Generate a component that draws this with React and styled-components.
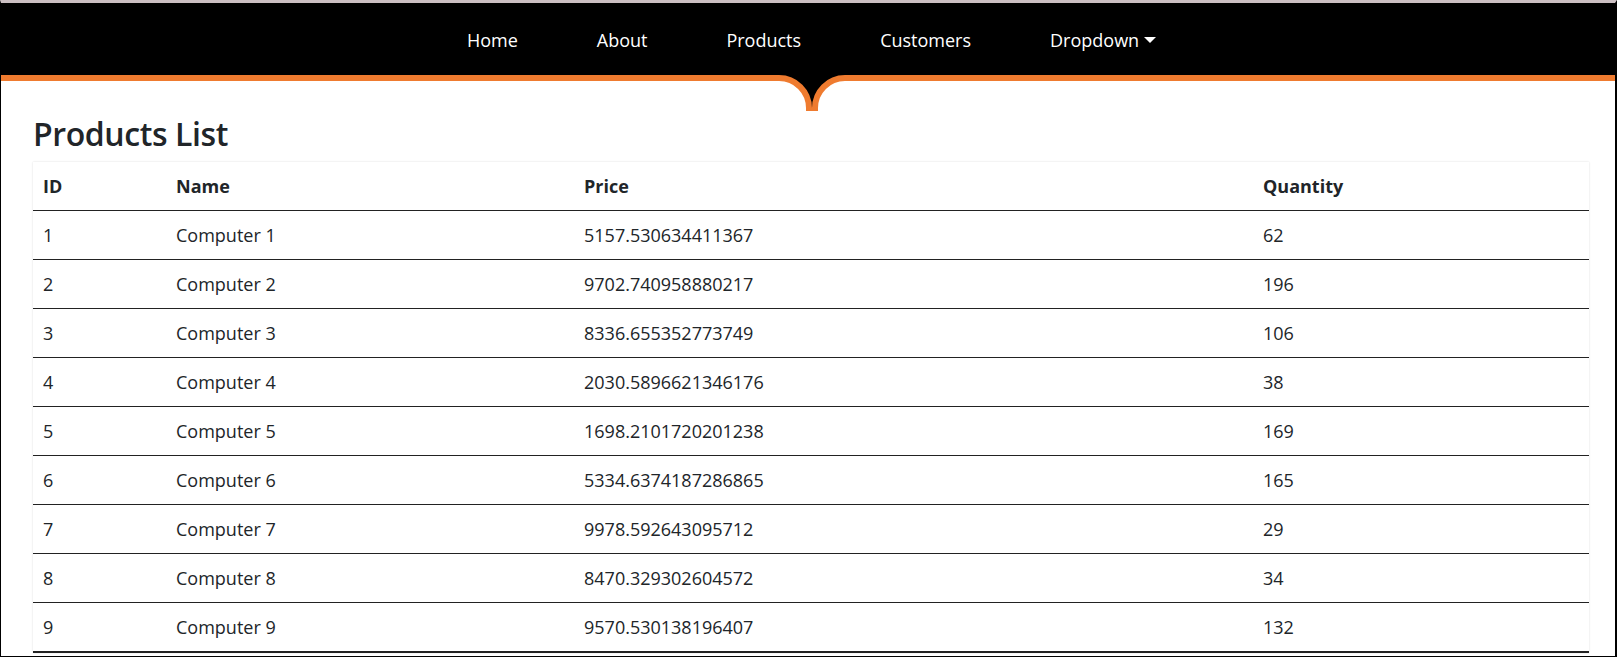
import React from "react";
import styled, { createGlobalStyle } from "styled-components";

const GlobalStyle = createGlobalStyle`
  html, body { margin: 0; padding: 0; background: #fff; }
  body {
    font-family: "Segoe UI", "Open Sans", "Noto Sans", sans-serif;
    color: #212529;
  }
  * { box-sizing: border-box; }
`;

const Frame = styled.div`
  height: 657px;
  border-top: 3px solid #cbbfc2;
  border-left: 1px solid #000;
  border-right: 2px solid #000;
  border-bottom: 1px solid #000;
  overflow: hidden;
  display: flex;
  flex-direction: column;
`;

const NavBar = styled.nav`
  position: relative;
  flex: none;
  height: 78px;
  background: #000;
  border-bottom: 6px solid #ef7b2f;
  z-index: 2;
`;

const NavList = styled.ul`
  list-style: none;
  margin: 0;
  padding: 2px 0 0 7px;
  height: 72px;
  display: flex;
  align-items: center;
  justify-content: center;
  gap: 79px;
`;

const NavLink = styled.a`
  color: #fff;
  font-size: 18px;
  line-height: 26px;
  text-decoration: none;
  display: inline-flex;
  align-items: center;
  white-space: nowrap;

  ${(p) =>
    p.$dropdown &&
    `
    &::after {
      content: "";
      display: inline-block;
      margin-left: 5px;
      border-top: 6px solid #fff;
      border-left: 6px solid transparent;
      border-right: 6px solid transparent;
    }
  `}
`;

const Notch = styled.svg`
  position: absolute;
  top: 69px;
  left: calc(50% - 48px);
  width: 104px;
  height: 44px;
  overflow: visible;
`;

const Main = styled.main`
  flex: 1;
  padding: 0 26px 0 32px;
`;

const Title = styled.h3`
  margin: 34px 0 9px;
  font-size: 32px;
  line-height: 38px;
  font-weight: 600;
  letter-spacing: -0.4px;
  color: #212529;
`;

const Table = styled.table`
  width: 100%;
  border-collapse: collapse;
  table-layout: fixed;
  box-shadow: 0 0 2px rgba(0, 0, 0, 0.14);
  font-size: 18px;
  color: #212529;
`;

const HeadCell = styled.th`
  text-align: left;
  font-weight: 700;
  padding: 10px 10px;
  line-height: 28px;
  border-bottom: 1px solid #222;
`;

const Row = styled.tr`
  & > td {
    border-bottom: ${(p) => (p.$last ? "2px solid #222" : "1px solid #222")};
  }
`;

const Cell = styled.td`
  padding: 10px 10px;
  line-height: 28px;
  font-weight: 400;
`;

const products = [
  [1, "Computer 1", "5157.530634411367", 62],
  [2, "Computer 2", "9702.740958880217", 196],
  [3, "Computer 3", "8336.655352773749", 106],
  [4, "Computer 4", "2030.5896621346176", 38],
  [5, "Computer 5", "1698.2101720201238", 169],
  [6, "Computer 6", "5334.6374187286865", 165],
  [7, "Computer 7", "9978.592643095712", 29],
  [8, "Computer 8", "8470.329302604572", 34],
  [9, "Computer 9", "9570.530138196407", 132],
];

export default function App() {
  return (
    <>
      <GlobalStyle />
      <Frame>
        <NavBar>
          <NavList>
            <li><NavLink href="#">Home</NavLink></li>
            <li><NavLink href="#">About</NavLink></li>
            <li><NavLink href="#">Products</NavLink></li>
            <li><NavLink href="#">Customers</NavLink></li>
            <li><NavLink href="#" $dropdown>Dropdown</NavLink></li>
          </NavList>
          <Notch viewBox="0 0 104 44">
            <path
              d="M19 0 H85 V6 A30 30 0 0 0 55 36 V39 H49 V36 A30 30 0 0 0 19 6 Z"
              fill="#000"
            />
            <path
              d="M0 6 H19 A30 30 0 0 1 49 36 V39"
              fill="none"
              stroke="#ef7b2f"
              strokeWidth="6"
            />
            <path
              d="M104 6 H85 A30 30 0 0 0 55 36 V39"
              fill="none"
              stroke="#ef7b2f"
              strokeWidth="6"
            />
          </Notch>
        </NavBar>
        <Main>
          <Title>Products List</Title>
          <Table>
            <colgroup>
              <col style={{ width: "133px" }} />
              <col style={{ width: "408px" }} />
              <col style={{ width: "679px" }} />
              <col />
            </colgroup>
            <thead>
              <tr>
                <HeadCell>ID</HeadCell>
                <HeadCell>Name</HeadCell>
                <HeadCell>Price</HeadCell>
                <HeadCell>Quantity</HeadCell>
              </tr>
            </thead>
            <tbody>
              {products.map(([id, name, price, qty], i) => (
                <Row key={id} $last={i === products.length - 1}>
                  <Cell>{id}</Cell>
                  <Cell>{name}</Cell>
                  <Cell>{price}</Cell>
                  <Cell>{qty}</Cell>
                </Row>
              ))}
            </tbody>
          </Table>
        </Main>
      </Frame>
    </>
  );
}
